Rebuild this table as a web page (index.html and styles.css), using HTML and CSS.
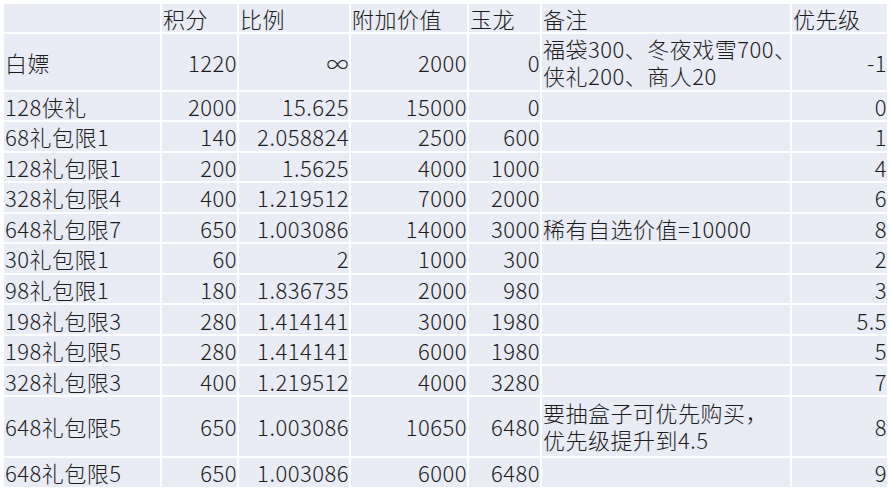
FILE: index.html
```
<!DOCTYPE html>
<html>
<head>
<meta charset="utf-8">
<link rel="stylesheet" href="styles.css">
</head>
<body>
<div class="sheet">
  <div class="c"></div><div class="c">积分</div><div class="c">比例</div><div class="c">附加价值</div><div class="c">玉龙</div><div class="c">备注</div><div class="c">优先级</div>

  <div class="c">白嫖</div><div class="c n">1220</div><div class="c n">∞</div><div class="c n">2000</div><div class="c n">0</div><div class="c note">福袋300、冬夜戏雪700、<br>侠礼200、商人20</div><div class="c n">-1</div>

  <div class="c">128侠礼</div><div class="c n">2000</div><div class="c n">15.625</div><div class="c n">15000</div><div class="c n">0</div><div class="c"></div><div class="c n">0</div>

  <div class="c">68礼包限1</div><div class="c n">140</div><div class="c n">2.058824</div><div class="c n">2500</div><div class="c n">600</div><div class="c"></div><div class="c n">1</div>

  <div class="c">128礼包限1</div><div class="c n">200</div><div class="c n">1.5625</div><div class="c n">4000</div><div class="c n">1000</div><div class="c"></div><div class="c n">4</div>

  <div class="c">328礼包限4</div><div class="c n">400</div><div class="c n">1.219512</div><div class="c n">7000</div><div class="c n">2000</div><div class="c"></div><div class="c n">6</div>

  <div class="c">648礼包限7</div><div class="c n">650</div><div class="c n">1.003086</div><div class="c n">14000</div><div class="c n">3000</div><div class="c">稀有自选价值=10000</div><div class="c n">8</div>

  <div class="c">30礼包限1</div><div class="c n">60</div><div class="c n">2</div><div class="c n">1000</div><div class="c n">300</div><div class="c"></div><div class="c n">2</div>

  <div class="c">98礼包限1</div><div class="c n">180</div><div class="c n">1.836735</div><div class="c n">2000</div><div class="c n">980</div><div class="c"></div><div class="c n">3</div>

  <div class="c">198礼包限3</div><div class="c n">280</div><div class="c n">1.414141</div><div class="c n">3000</div><div class="c n">1980</div><div class="c"></div><div class="c n">5.5</div>

  <div class="c">198礼包限5</div><div class="c n">280</div><div class="c n">1.414141</div><div class="c n">6000</div><div class="c n">1980</div><div class="c"></div><div class="c n">5</div>

  <div class="c">328礼包限3</div><div class="c n">400</div><div class="c n">1.219512</div><div class="c n">4000</div><div class="c n">3280</div><div class="c"></div><div class="c n">7</div>

  <div class="c">648礼包限5</div><div class="c n">650</div><div class="c n">1.003086</div><div class="c n">10650</div><div class="c n">6480</div><div class="c note">要抽盒子可优先购买，<br>优先级提升到4.5</div><div class="c n">8</div>

  <div class="c">648礼包限5</div><div class="c n">650</div><div class="c n">1.003086</div><div class="c n">6000</div><div class="c n">6480</div><div class="c"></div><div class="c n">9</div>
</div>
</body>
</html>
```
FILE: styles.css
```
html, body {
  margin: 0;
  padding: 0;
  background: #ffffff;
}
.sheet {
  display: grid;
  margin: 4px 0 0 4px;
  width: 883px;
  grid-template-columns: 156px 75px 110px 116px 71px 248px 95px;
  grid-template-rows: 28px 56px 28px repeat(9, 28.56px) 59px 29px;
  gap: 2px;
  font-family: "Noto Sans CJK SC", "Liberation Sans", sans-serif;
  font-size: 22px;
  font-weight: 300;
  letter-spacing: 0.5px;
  color: #1c1c1c;
}
.c {
  background: #e9ebf5;
  display: flex;
  align-items: center;
  padding: 0 1px 0 1px;
  white-space: nowrap;
  overflow: visible;
  line-height: 28px;
}
.n {
  justify-content: flex-end;
  text-align: right;
  padding-right: 0;
}
.note {
  line-height: 27px;
}
```
